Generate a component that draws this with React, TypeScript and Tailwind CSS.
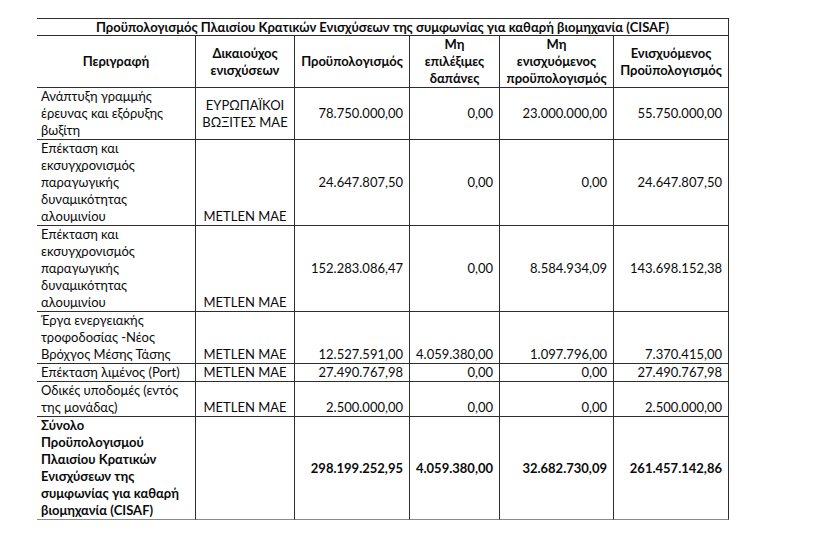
import React from "react";

type V = "top" | "mid" | "bot";
type H = "l" | "c" | "r";
type Cell = { t: string[]; h: H; v: V; b?: boolean };

const hCls: Record<H, string> = {
  l: "text-left pl-[4px] pr-[2px]",
  c: "text-center px-[2px]",
  r: "text-right pr-[6px] pl-[2px]",
};
const vCls: Record<V, string> = {
  top: "justify-start",
  mid: "justify-center",
  bot: "justify-end",
};

const header: string[][] = [
  ["Περιγραφή"],
  ["Δικαιούχος", "ενισχύσεων"],
  ["Προϋπολογισμός"],
  ["Μη", "επιλέξιμες", "δαπάνες"],
  ["Μη", "ενισχυόμενος", "προϋπολογισμός"],
  ["Ενισχυόμενος", "Προϋπολογισμός"],
];

const rows: { lines: number; cells: Cell[]; last?: boolean }[] = [
  {
    lines: 3,
    cells: [
      { t: ["Ανάπτυξη γραμμής", "έρευνας και εξόρυξης", "βωξίτη"], h: "l", v: "top" },
      { t: ["ΕΥΡΩΠΑΪΚΟΙ", "ΒΩΞΙΤΕΣ ΜΑΕ"], h: "c", v: "mid" },
      { t: ["78.750.000,00"], h: "r", v: "mid" },
      { t: ["0,00"], h: "r", v: "mid" },
      { t: ["23.000.000,00"], h: "r", v: "mid" },
      { t: ["55.750.000,00"], h: "r", v: "mid" },
    ],
  },
  {
    lines: 5,
    cells: [
      { t: ["Επέκταση και", "εκσυγχρονισμός", "παραγωγικής", "δυναμικότητας", "αλουμινίου"], h: "l", v: "top" },
      { t: ["METLEN MAE"], h: "c", v: "bot" },
      { t: ["24.647.807,50"], h: "r", v: "mid" },
      { t: ["0,00"], h: "r", v: "mid" },
      { t: ["0,00"], h: "r", v: "mid" },
      { t: ["24.647.807,50"], h: "r", v: "mid" },
    ],
  },
  {
    lines: 5,
    cells: [
      { t: ["Επέκταση και", "εκσυγχρονισμός", "παραγωγικής", "δυναμικότητας", "αλουμινίου"], h: "l", v: "top" },
      { t: ["METLEN MAE"], h: "c", v: "bot" },
      { t: ["152.283.086,47"], h: "r", v: "mid" },
      { t: ["0,00"], h: "r", v: "mid" },
      { t: ["8.584.934,09"], h: "r", v: "mid" },
      { t: ["143.698.152,38"], h: "r", v: "mid" },
    ],
  },
  {
    lines: 3,
    cells: [
      { t: ["Έργα ενεργειακής", "τροφοδοσίας -Νέος", "Βρόχγος Μέσης Τάσης"], h: "l", v: "top" },
      { t: ["METLEN MAE"], h: "c", v: "bot" },
      { t: ["12.527.591,00"], h: "r", v: "bot" },
      { t: ["4.059.380,00"], h: "r", v: "bot" },
      { t: ["1.097.796,00"], h: "r", v: "bot" },
      { t: ["7.370.415,00"], h: "r", v: "bot" },
    ],
  },
  {
    lines: 1,
    cells: [
      { t: ["Επέκταση λιμένος (Port)"], h: "l", v: "top" },
      { t: ["METLEN MAE"], h: "c", v: "bot" },
      { t: ["27.490.767,98"], h: "r", v: "bot" },
      { t: ["0,00"], h: "r", v: "bot" },
      { t: ["0,00"], h: "r", v: "bot" },
      { t: ["27.490.767,98"], h: "r", v: "bot" },
    ],
  },
  {
    lines: 2,
    cells: [
      { t: ["Οδικές υποδομές (εντός", "της μονάδας)"], h: "l", v: "top" },
      { t: ["METLEN MAE"], h: "c", v: "bot" },
      { t: ["2.500.000,00"], h: "r", v: "bot" },
      { t: ["0,00"], h: "r", v: "bot" },
      { t: ["0,00"], h: "r", v: "bot" },
      { t: ["2.500.000,00"], h: "r", v: "bot" },
    ],
  },
  {
    lines: 6,
    last: true,
    cells: [
      {
        t: ["Σύνολο", "Προϋπολογισμού", "Πλαισίου Κρατικών", "Ενισχύσεων της", "συμφωνίας για καθαρή", "βιομηχανία (CISAF)"],
        h: "l",
        v: "top",
        b: true,
      },
      { t: [], h: "c", v: "mid" },
      { t: ["298.199.252,95"], h: "r", v: "mid", b: true },
      { t: ["4.059.380,00"], h: "r", v: "mid", b: true },
      { t: ["32.682.730,09"], h: "r", v: "mid", b: true },
      { t: ["261.457.142,86"], h: "r", v: "mid", b: true },
    ],
  },
];

function Lines({ t }: { t: string[] }) {
  return (
    <>
      {t.map((s, i) => (
        <div key={i} className="whitespace-nowrap">
          {s}
        </div>
      ))}
    </>
  );
}

export default function App() {
  return (
    <div className="w-[818px] h-[545px] bg-white overflow-hidden pt-[18px] pl-[37px] font-[family-name:Lato,'Open_Sans',sans-serif] text-[13px] leading-[17px] text-[#0a0a0a]">
      <div className="grid w-[692px] grid-cols-[159px_99px_115px_90px_114px_115px]">
        <div className="col-span-6 border-t border-b border-r border-[#2e2e2e] h-[18px] leading-[16px] text-center font-bold whitespace-nowrap">
          Προϋπολογισμός Πλαισίου Κρατικών Ενισχύσεων της συμφωνίας για καθαρή βιομηχανία (CISAF)
        </div>
        {header.map((t, i) => (
          <div
            key={i}
            className="h-[52px] flex flex-col justify-center text-center font-bold border-b border-r border-[#2e2e2e]"
          >
            <Lines t={t} />
          </div>
        ))}
        {rows.map((r, ri) =>
          r.cells.map((c, ci) => (
            <div
              key={`${ri}-${ci}`}
              className={`flex flex-col border-r border-b ${r.last ? "border-b-[#8a8a8a]" : ""} border-[#2e2e2e] ${hCls[c.h]} ${vCls[c.v]} ${c.b ? "font-bold" : ""} ${
                r.lines === 1
                  ? "h-[18px]"
                  : r.lines === 2
                  ? "h-[35px]"
                  : r.lines === 3
                  ? "h-[52px]"
                  : r.lines === 5
                  ? "h-[86px]"
                  : "h-[103px]"
              }`}
            >
              <Lines t={c.t} />
            </div>
          ))
        )}
      </div>
    </div>
  );
}
